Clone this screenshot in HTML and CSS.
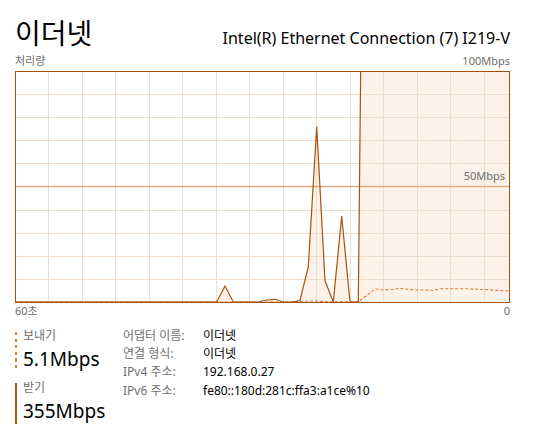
FILE: index.html
```html
<!DOCTYPE html>
<html lang="ko">
<head>
<meta charset="utf-8">
<title>이더넷</title>
<link rel="stylesheet" href="styles.css">
</head>
<body>
<div class="page">
  <header class="header">
    <h1 class="title">이더넷</h1>
    <div class="adapter">Intel(R) Ethernet Connection (7) I219-V</div>
  </header>

  <div class="axis axis-top"><span>처리량</span><span>100Mbps</span></div>

  <div class="chart">
    <svg class="chart-svg" width="495" height="232" viewBox="0 0 495 232">
      <polygon class="recv-fill" points="0,231 201.7,231 210,215 218.3,231 243.3,231 251.7,229 260,228.3 268.3,231 276.7,231 285,229.5 293.3,195.7 301.7,55.7 310,209.7 318.3,231 326.7,145 335,231 343.3,231 351.7,-589 494,-589 494,231"/>
      <path class="grid" d="M33.5 0V232M67.5 0V232M100.5 0V232M134.5 0V232M167.5 0V232M201.5 0V232M234.5 0V232M268.5 0V232M301.5 0V232M335.5 0V232M368.5 0V232M402.5 0V232M435.5 0V232M469.5 0V232M0 23.5H495M0 46.5H495M0 69.5H495M0 92.5H495M0 139.5H495M0 162.5H495M0 185.5H495M0 208.5H495"/>
      <path class="mid" d="M0 115.5H495"/>
      <polyline class="send-line" points="0,231 276.7,231 285,230.5 293.3,230 301.7,230 310,230.5 318.3,231 326.7,230.5 335,230.5 343.3,230.7 351.7,224.5 360,218 368.3,219 376.7,218.5 385,217.3 393.3,218.5 401.7,219 410,219 418.3,219.3 426.7,217.7 435,217.7 443.3,217.7 451.7,217.7 460,218.3 468.3,218.5 476.7,219 485,219.5 494,220"/>
      <polyline class="recv-line" points="0,231 201.7,231 210,215 218.3,231 243.3,231 251.7,229 260,228.3 268.3,231 276.7,231 285,229.5 293.3,195.7 301.7,55.7 310,209.7 318.3,231 326.7,145 335,231 343.3,231 351.7,-589 494,-589"/>
      <rect class="frame" x="0.5" y="0.5" width="494" height="231"/>
    </svg>
    <span class="mid-label">50Mbps</span>
  </div>

  <div class="axis axis-bottom"><span>60초</span><span>0</span></div>

  <section class="stats">
    <div class="rates">
      <div class="rate rate-send">
        <div class="rate-label">보내기</div>
        <div class="rate-value">5.1Mbps</div>
      </div>
      <div class="rate rate-recv">
        <div class="rate-label">받기</div>
        <div class="rate-value">355Mbps</div>
      </div>
    </div>
    <dl class="info">
      <dt>어댑터 이름:</dt><dd>이더넷</dd>
      <dt>연결 형식:</dt><dd>이더넷</dd>
      <dt>IPv4 주소:</dt><dd>192.168.0.27</dd>
      <dt>IPv6 주소:</dt><dd>fe80::180d:281c:ffa3:a1ce%10</dd>
    </dl>
  </section>
</div>
</body>
</html>
```

FILE: styles.css
```css
html, body {
  margin: 0;
  padding: 0;
  background: #ffffff;
}

body {
  font-family: "Noto Sans", "Noto Sans CJK KR", sans-serif;
  color: #000000;
}

.page {
  width: 495px;
  padding: 15px 23px 0 15px;
}

.header {
  display: flex;
  justify-content: space-between;
  align-items: baseline;
  height: 36px;
}

.title {
  margin: 0;
  font-size: 28px;
  font-weight: 400;
  line-height: 36px;
}

.adapter {
  font-size: 16px;
  line-height: 22px;
}

.axis {
  display: flex;
  justify-content: space-between;
  font-size: 11px;
  line-height: 14px;
  color: #6e6e6e;
}

.axis-top {
  margin-top: 3px;
  margin-bottom: 3px;
}

.axis-bottom {
  margin-top: 1px;
}

.chart {
  position: relative;
  width: 495px;
  height: 232px;
}

.chart-svg {
  display: block;
}

.recv-fill {
  fill: #fcf2ea;
}

.grid {
  fill: none;
  stroke: #f0dcca;
  stroke-width: 1;
}

.mid {
  fill: none;
  stroke: #dcae88;
  stroke-width: 1.5;
}

.send-line {
  fill: none;
  stroke: #e2783a;
  stroke-width: 1.1;
  stroke-dasharray: 3 2;
}

.recv-line {
  fill: none;
  stroke: #a7520c;
  stroke-width: 1.2;
  stroke-linejoin: miter;
}

.frame {
  fill: none;
  stroke: #a44f05;
  stroke-width: 1;
}

.mid-label {
  position: absolute;
  right: 5px;
  top: 98px;
  font-size: 11px;
  line-height: 14px;
  color: #6e6e6e;
}

.stats {
  display: flex;
  align-items: flex-start;
  margin-top: 9px;
}

.rates {
  width: 108px;
  display: flex;
  flex-direction: column;
  gap: 6px;
  margin-top: 1px;
}

.rate {
  padding-left: 8px;
  background-repeat: no-repeat;
}

.rate-send {
  background-image: repeating-linear-gradient(to bottom, #e07a3e 0, #e07a3e 3.3px, transparent 3.3px, transparent 6.6px);
  background-size: 2px 37px;
  background-position: 0 4px;
}

.rate-recv {
  background-image: linear-gradient(#b05a10, #b05a10);
  background-size: 2px 41px;
  background-position: 0 3px;
}

.rate-label {
  font-size: 12px;
  line-height: 16px;
  color: #6e6e6e;
}

.rate-value {
  font-size: 19px;
  line-height: 30px;
}

.info {
  margin: 0;
  display: grid;
  grid-template-columns: 80px auto;
  align-content: start;
  font-size: 12px;
  line-height: 18.2px;
}

.info dt {
  color: #707070;
}

.info dd {
  margin: 0;
  color: #000000;
}
```
